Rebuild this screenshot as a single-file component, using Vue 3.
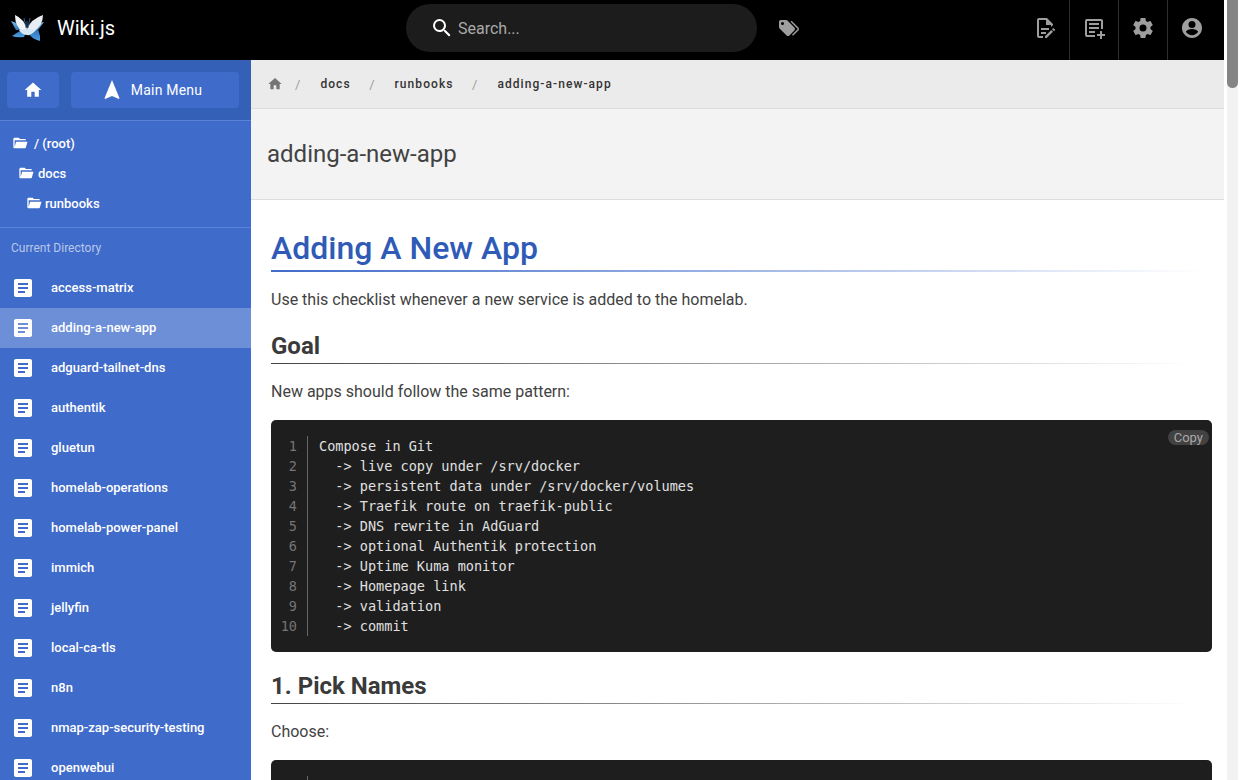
<script setup>
const crumbs = ['docs', 'runbooks', 'adding-a-new-app']
const pages = ['access-matrix','adding-a-new-app','adguard-tailnet-dns','authentik','gluetun','homelab-operations','homelab-power-panel','immich','jellyfin','local-ca-tls','n8n','nmap-zap-security-testing','openwebui']
const code = ['Compose in Git','  -> live copy under /srv/docker','  -> persistent data under /srv/docker/volumes','  -> Traefik route on traefik-public','  -> DNS rewrite in AdGuard','  -> optional Authentik protection','  -> Uptime Kuma monitor','  -> Homepage link','  -> validation','  -> commit']
const folders = [{ name: '/ (root)', cls: 'f0' }, { name: 'docs', cls: 'f1' }, { name: 'runbooks', cls: 'f2' }]
</script>

<template>
  <div class="page">
    <div class="main">
      <header class="top">
        <div class="brand">
          <svg class="logo" viewBox="0 0 34 28" width="34" height="28">
            <defs>
              <linearGradient id="wl" x1="0" y1="0" x2="1" y2="1"><stop offset="0" stop-color="#7cc4f0"/><stop offset="1" stop-color="#1c62ad"/></linearGradient>
              <linearGradient id="wr" x1="1" y1="0" x2="0" y2="1"><stop offset="0" stop-color="#7cc4f0"/><stop offset="1" stop-color="#1c62ad"/></linearGradient>
              <linearGradient id="wd" x1="0" y1="0" x2="0" y2="1"><stop offset="0" stop-color="#2a6fb8"/><stop offset="1" stop-color="#4d9fe0"/></linearGradient>
            </defs>
            <path d="M1 7 L12 11 L14 16 L6 16Z" fill="url(#wl)"/>
            <path d="M34 8 L24 10 L21 16 L28 16Z" fill="url(#wr)"/>
            <path d="M2 22 L13 15 L16 18 L14 23 Q7 24 2 22Z" fill="url(#wd)"/>
            <path d="M18 16 L28 15 L30 22 L30 27 Q22 25 19 20Z" fill="url(#wd)"/>
            <path d="M5 1 Q14 5 17 15 L13 18 Q5 13 5 1Z" fill="#f2f4f8"/>
            <path d="M33 1 Q33 12 23 18 L17 15 Q21 5 33 1Z" fill="#e9edf3"/>
            <path d="M9 16 Q14 15 17 15 Q22 15 26 16 Q21 22 17 21 Q12 21 9 16Z" fill="#d5e6f4"/>
            <path d="M16 14 L14 4 M18 14 L20 4 M17 14 L17 7" stroke="#3f6e9f" stroke-width="0.8" fill="none"/>
          </svg>
          <span class="brand-name">Wiki.js</span>
        </div>
        <div class="center">
          <div class="search">
            <svg class="i-search" viewBox="0 0 24 24" width="24" height="24"><path fill="#fff" d="M9.5 3A6.5 6.5 0 0 1 16 9.5C16 11.11 15.41 12.59 14.44 13.73L14.71 14H15.5L20.5 19L19 20.5L14 15.5V14.71L13.73 14.44C12.59 15.41 11.11 16 9.5 16A6.5 6.5 0 0 1 3 9.5A6.5 6.5 0 0 1 9.5 3M9.5 5C7 5 5 7 5 9.5C5 12 7 14 9.5 14C12 14 14 12 14 9.5C14 7 12 5 9.5 5Z"/></svg>
            <span class="search-text">Search...</span>
          </div>
          <svg class="i-tags" viewBox="0 0 24 24" width="24" height="24"><path fill="#9e9e9e" d="M5.5 9A1.5 1.5 0 0 0 7 7.5A1.5 1.5 0 0 0 5.5 6A1.5 1.5 0 0 0 4 7.5A1.5 1.5 0 0 0 5.5 9M17.41 11.58C17.77 11.94 18 12.44 18 13C18 13.55 17.78 14.05 17.41 14.41L12.41 19.41C12.05 19.77 11.55 20 11 20C10.45 20 9.95 19.78 9.58 19.41L2.59 12.42C2.22 12.05 2 11.55 2 11V6C2 4.89 2.89 4 4 4H9C9.55 4 10.05 4.22 10.41 4.58L17.41 11.58M13.54 5.71L14.54 4.71L21.41 11.58C21.78 11.94 22 12.45 22 13C22 13.55 21.78 14.05 21.42 14.41L16.04 19.79L15.04 18.79L20.75 13L13.54 5.71Z"/></svg>
        </div>
        <div class="tools">
          <div class="tool"><svg viewBox="0 0 24 24" width="24" height="24"><path fill="#9e9e9e" d="M6 2C4.9 2 4 2.9 4 4V20C4 21.1 4.9 22 6 22H10V20H6V4H13V9H18V11.1L20 9.1V8L14 2H6M8 12V14H16V12H8M8 16V18H13V16H8M21.7 13.3L20.7 12.3C20.5 12.1 20.2 12.1 20 12.3L19 13.3L21 15.3L22 14.3C22.2 14.1 22.2 13.6 21.7 13.3M18.3 14L12 20.3V22H13.7L20 15.7L18.3 14Z"/></svg></div>
          <div class="tool"><svg viewBox="0 0 24 24" width="24" height="24"><path fill="#9e9e9e" d="M5 3H19C20.1 3 21 3.9 21 5V13H19V5H5V19H13V21H5C3.9 21 3 20.1 3 19V5C3 3.9 3.9 3 5 3M7 7H17V9H7V7M7 11H17V13H7V11M7 15H13V17H7V15M18 15H20V18H23V20H20V23H18V20H15V18H18V15Z"/></svg></div>
          <div class="tool"><svg viewBox="0 0 24 24" width="24" height="24"><path fill="#9e9e9e" d="M12 15.5A3.5 3.5 0 0 1 8.5 12A3.5 3.5 0 0 1 12 8.5A3.5 3.5 0 0 1 15.5 12A3.5 3.5 0 0 1 12 15.5M19.43 12.97C19.47 12.65 19.5 12.33 19.5 12C19.5 11.67 19.47 11.34 19.43 11L21.54 9.37C21.73 9.22 21.78 8.95 21.66 8.73L19.66 5.27C19.54 5.05 19.27 4.96 19.05 5.05L16.56 6.05C16.04 5.66 15.5 5.32 14.87 5.07L14.5 2.42C14.46 2.18 14.25 2 14 2H10C9.75 2 9.54 2.18 9.5 2.42L9.13 5.07C8.5 5.32 7.96 5.66 7.44 6.05L4.95 5.05C4.73 4.96 4.46 5.05 4.34 5.27L2.34 8.73C2.21 8.95 2.27 9.22 2.46 9.37L4.57 11C4.53 11.34 4.5 11.67 4.5 12C4.5 12.33 4.53 12.65 4.57 12.97L2.46 14.63C2.27 14.78 2.21 15.05 2.34 15.27L4.34 18.73C4.46 18.95 4.73 19.03 4.95 18.95L7.44 17.94C7.96 18.34 8.5 18.68 9.13 18.93L9.5 21.58C9.54 21.82 9.75 22 10 22H14C14.25 22 14.46 21.82 14.5 21.58L14.87 18.93C15.5 18.67 16.04 18.34 16.56 17.94L19.05 18.95C19.27 19.03 19.54 18.95 19.66 18.73L21.66 15.27C21.78 15.05 21.73 14.78 21.54 14.63L19.43 12.97Z"/></svg></div>
          <div class="tool"><svg viewBox="0 0 24 24" width="24" height="24"><path fill="#9e9e9e" d="M12 2C6.48 2 2 6.48 2 12S6.48 22 12 22 22 17.52 22 12 17.52 2 12 2M12 5A3.5 3.5 0 1 1 12 12 3.5 3.5 0 0 1 12 5M12 19.2C9.5 19.2 7.29 17.92 6 15.98C6.03 13.99 10 12.9 12 12.9C13.99 12.9 17.97 13.99 18 15.98C16.71 17.92 14.5 19.2 12 19.2Z"/></svg></div>
        </div>
      </header>

      <div class="body">
        <aside class="side">
          <div class="side-top">
            <div class="btn btn-home"><svg viewBox="0 0 24 24" width="20" height="20"><path fill="#fff" d="M10 20V14H14V20H19V12H22L12 3L2 12H5V20H10Z"/></svg></div>
            <div class="btn btn-menu">
              <svg viewBox="0 0 24 24" width="24" height="24"><path fill="#fff" d="M12 2L4.5 20.3L5.2 21L12 18L18.8 21L19.5 20.3L12 2Z"/></svg>
              <span>Main Menu</span>
            </div>
          </div>
          <div class="tree">
            <div v-for="f in folders" :key="f.name" class="folder" :class="f.cls">
              <svg viewBox="0 0 24 24" width="16" height="16"><path fill="#fff" d="M19 20H4C2.89 20 2 19.1 2 18V6C2 4.89 2.89 4 4 4H10L12 6H19C20.1 6 21 6.9 21 8H4V18L6.14 10H23.21L20.93 18.5C20.7 19.37 19.92 20 19 20Z" fill-rule="evenodd"/></svg>
              <span>{{ f.name }}</span>
            </div>
          </div>
          <div class="subhead">Current Directory</div>
          <div class="list">
            <div v-for="p in pages" :key="p" class="item" :class="{ active: p === 'adding-a-new-app' }">
              <svg viewBox="0 0 24 24" width="24" height="24"><path fill="#fff" d="M19 3H5C3.89 3 3 3.89 3 5V19C3 20.1 3.9 21 5 21H19C20.1 21 21 20.1 21 19V5C21 3.89 20.1 3 19 3M14 17H7V15H14V17M17 13H7V11H17V13M17 9H7V7H17V9Z"/></svg>
              <span>{{ p }}</span>
            </div>
          </div>
        </aside>

        <main class="content">
          <div class="crumbs">
            <svg viewBox="0 0 24 24" width="16" height="16"><path fill="#757575" d="M10 20V14H14V20H19V12H22L12 3L2 12H5V20H10Z"/></svg>
            <template v-for="c in crumbs" :key="c">
              <span class="sep">/</span>
              <span class="crumb">{{ c }}</span>
            </template>
          </div>
          <div class="title-bar"><span>adding-a-new-app</span></div>
          <article class="doc">
            <h1>Adding A New App</h1>
            <p class="para">Use this checklist whenever a new service is added to the homelab.</p>
            <h2 class="goal">Goal</h2>
            <p class="para">New apps should follow the same pattern:</p>
            <div class="code">
              <span class="copy">Copy</span>
              <div class="nums"><div v-for="(l, i) in code" :key="i">{{ i + 1 }}</div></div>
              <div class="lines"><div v-for="(l, i) in code" :key="i">{{ l }}</div></div>
            </div>
            <h2 class="pick">1. Pick Names</h2>
            <p class="para">Choose:</p>
            <div class="code code2">
              <div class="nums"></div>
            </div>
          </article>
        </main>
      </div>
    </div>
    <div class="scrollbar"><div class="track"><div class="thumb"></div></div></div>
  </div>
</template>

<style>
html, body { margin: 0; overflow: hidden; }
</style>

<style scoped>
.page { display: flex; width: 1241px; height: 780px; overflow: hidden; font-family: Roboto, "Liberation Sans", sans-serif; background: #fff; }
.main { width: 1224px; flex: none; display: flex; flex-direction: column; height: 780px; }
.scrollbar { width: 17px; flex: none; padding-left: 3px; box-sizing: border-box; }
.track { width: 11px; height: 780px; background: #f2f2f2; }
.thumb { width: 11px; height: 88px; background: #858585; border-radius: 0 0 6px 6px; }

.top { height: 60px; flex: none; background: #000; display: flex; align-items: center; box-sizing: border-box; padding-bottom: 4px; }
.brand { display: flex; align-items: center; width: 400px; }
.logo { margin-left: 10px; }
.brand-name { color: #fff; font-size: 20px; margin-left: 13px; }
.center { display: flex; align-items: center; }
.search { width: 351px; height: 48px; margin-left: 6px; border-radius: 24px; background: #1c1c1c; display: flex; align-items: center; box-sizing: border-box; padding-left: 24px; }
.i-search { margin-right: 4px; }
.search-text { color: #a9a9a9; font-size: 16px; }
.i-tags { margin-left: 20px; }
.tools { margin-left: auto; display: flex; height: 60px; margin-bottom: -4px; padding-right: 8px; }
.tool { width: 49px; height: 60px; display: flex; align-items: center; justify-content: center; border-left: 1px solid #2e2e2e; padding-bottom: 4px; box-sizing: border-box; }
.tool:first-child { border-left-color: transparent; }

.body { flex: 1; display: flex; min-height: 0; }
.side { width: 251px; flex: none; background: #3f6bca; overflow: hidden; }
.side-top { height: 61px; box-sizing: border-box; background: #3560b8; border-bottom: 1px solid #5a82d6; display: flex; padding: 12px 12px 0 7px; gap: 12px; }
.btn { height: 36px; background: #3f6bca; border-radius: 4px; display: flex; align-items: center; justify-content: center; color: #fff; font-size: 14px; letter-spacing: 0.2px; }
.btn-home { width: 52px; flex: none; }
.btn-menu { flex: 1; gap: 7px; padding-right: 8px; box-sizing: border-box; }
.tree { padding: 7px 0 9px; border-bottom: 1px solid #5a82d6; height: 90px; }
.folder { height: 30px; display: flex; align-items: center; color: #fff; font-size: 13px; font-weight: 500; gap: 6px; }
.f0 { padding-left: 12px; }
.f1 { padding-left: 18px; gap: 4px; }
.f2 { padding-left: 26px; gap: 3px; }
.subhead { height: 40px; line-height: 40px; padding-left: 11px; font-size: 12px; color: #b8c8ea; }
.item { height: 40px; display: flex; align-items: center; padding-left: 11px; color: #fff; font-size: 13px; font-weight: 500; }
.item span { margin-left: 16px; margin-bottom: 1px; }
.item.active { background: #6d8fd8; }

.content { flex: 1; min-width: 0; overflow: hidden; background: #fff; }
.crumbs { height: 49px; box-sizing: border-box; background: #ebebeb; border-bottom: 1px solid #dedede; display: flex; align-items: center; padding-left: 16px; font-size: 12px; }
.sep { color: #9e9e9e; margin-left: 12px; margin-right: 20px; font-size: 13px; }
.crumb { color: #333; letter-spacing: 1.07px; font-weight: 500; }
.crumb + .sep { margin-left: 18.5px; }
.title-bar { height: 91px; box-sizing: border-box; background: #f3f3f3; border-bottom: 1px solid #dedede; display: flex; align-items: center; padding-left: 16px; font-size: 24px; color: #424242; }
.doc { padding: 0 12px 0 20px; color: #424242; font-size: 16px; }
h1 { margin: 28px 0 0; height: 44px; font-size: 32px; line-height: 40px; font-weight: 500; color: #2f5bb7; box-sizing: border-box; background: linear-gradient(90deg, #3f6bca, rgba(63,107,202,0) 99%) no-repeat bottom/100% 2px; }
h2 { margin: 0; height: 33px; font-size: 24px; line-height: 30px; font-weight: 700; color: #3a3a3a; box-sizing: border-box; background: linear-gradient(90deg, #444, rgba(68,68,68,0) 98%) no-repeat bottom/100% 1px; }
.para { margin: 16px 0 0; line-height: 24px; }
.goal { margin-top: 19px; }
.pick { margin-top: 19px; }
.code { position: relative; margin-top: 16px; background: #1e1e1e; border-radius: 5px; display: flex; padding: 16px 0; height: 232px; box-sizing: border-box; font-family: "DejaVu Sans Mono", monospace; font-size: 13.55px; line-height: 20px; color: #e0e0e0; }
.nums { width: 37px; text-align: right; box-sizing: border-box; padding-right: 10px; color: #757575; border-right: 1px solid #666; flex: none; }
.lines { padding-left: 11px; white-space: pre; }
.copy { position: absolute; top: 10px; right: 3px; height: 15px; line-height: 15px; padding: 0 6px; border-radius: 8px; background: #424242; color: #a8a8a8; font-family: Roboto, sans-serif; font-size: 13px; }
.code2 { height: 60px; }
</style>
